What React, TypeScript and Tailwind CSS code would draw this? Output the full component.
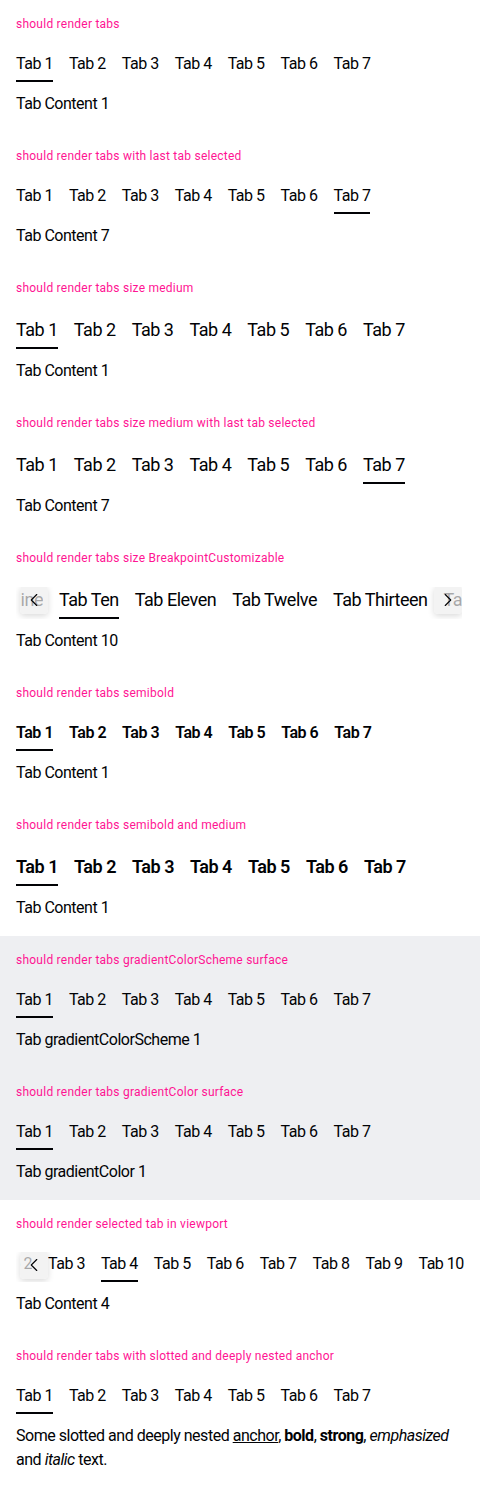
import { ChevronLeft, ChevronRight } from "lucide-react";
import clsx from "clsx";
import type { ReactNode } from "react";

type Size = "small" | "medium";

const seven = ["Tab 1", "Tab 2", "Tab 3", "Tab 4", "Tab 5", "Tab 6", "Tab 7"];

function Tab({ label, active, size, bold }: { label: string; active?: boolean; size: Size; bold?: boolean }) {
  return (
    <button
      className={clsx(
        "shrink-0 whitespace-nowrap border-b-2 pb-1 text-left",
        size === "medium" ? "text-[18px] leading-[26px]" : "text-base leading-6",
        bold && "font-semibold",
        active ? "border-[#010205]" : "border-transparent"
      )}
    >
      {label}
    </button>
  );
}

function ScrollButton({ side }: { side: "left" | "right" }) {
  return (
    <span
      className={clsx(
        "absolute top-[-1px] flex h-7 w-7 items-center justify-center rounded-[4px] bg-[#eeeeee]/70 shadow-[0_2px_6px_rgba(0,0,0,0.15)]",
        side === "left" ? "left-1" : "right-0"
      )}
    >
      {side === "left" ? (
        <ChevronLeft size={22} strokeWidth={1.25} className="text-[#010205]" />
      ) : (
        <ChevronRight size={22} strokeWidth={1.25} className="text-[#010205]" />
      )}
    </span>
  );
}

function TabsBar({
  tabs,
  active,
  size = "small",
  bold,
  before,
  beforeWidth,
  next,
}: {
  tabs: string[];
  active: number;
  size?: Size;
  bold?: boolean;
  before?: string[];
  beforeWidth?: string;
  next?: boolean;
}) {
  const scrolled = !!before;
  return (
    <div className={clsx("relative", scrolled && "overflow-hidden", next && "mr-[2px]")}>
      <div className="flex gap-4">
        {before && (
          <div className={clsx("ml-1 flex shrink-0 justify-end gap-4 overflow-hidden", beforeWidth)}>
            {before.map((t) => (
              <Tab key={t} label={t} size={size} bold={bold} />
            ))}
          </div>
        )}
        {tabs.map((t, i) => (
          <Tab key={t} label={t} size={size} bold={bold} active={i === active} />
        ))}
      </div>
      {scrolled && <ScrollButton side="left" />}
      {next && <ScrollButton side="right" />}
    </div>
  );
}

function Section({ title, size = "small", tabs, children }: { title: string; size?: Size; tabs: ReactNode; children: ReactNode }) {
  return (
    <div className="p-4">
      <p className="text-xs leading-4 tracking-[0.02em] text-[#ff1493]">{title}</p>
      <div className={size === "medium" ? "mt-[21px]" : "mt-5"}>{tabs}</div>
      <div className="mt-[10px] text-base leading-6">{children}</div>
    </div>
  );
}

export default function App() {
  return (
    <div className="bg-white font-['Roboto',sans-serif] tracking-[-0.03em] text-[#010205]">
      <Section title="should render tabs" tabs={<TabsBar tabs={seven} active={0} />}>
        Tab Content 1
      </Section>
      <Section title="should render tabs with last tab selected" tabs={<TabsBar tabs={seven} active={6} />}>
        Tab Content 7
      </Section>
      <Section title="should render tabs size medium" size="medium" tabs={<TabsBar tabs={seven} active={0} size="medium" />}>
        Tab Content 1
      </Section>
      <Section
        title="should render tabs size medium with last tab selected"
        size="medium"
        tabs={<TabsBar tabs={seven} active={6} size="medium" />}
      >
        Tab Content 7
      </Section>
      <Section
        title="should render tabs size BreakpointCustomizable"
        size="medium"
        tabs={
          <TabsBar
            tabs={["Tab Ten", "Tab Eleven", "Tab Twelve", "Tab Thirteen", "Tab Fourteen"]}
            active={0}
            size="medium"
            before={["Tab Nine"]}
            beforeWidth="w-[23px]"
            next
          />
        }
      >
        Tab Content 10
      </Section>
      <Section title="should render tabs semibold" tabs={<TabsBar tabs={seven} active={0} bold />}>
        Tab Content 1
      </Section>
      <Section
        title="should render tabs semibold and medium"
        size="medium"
        tabs={<TabsBar tabs={seven} active={0} size="medium" bold />}
      >
        Tab Content 1
      </Section>
      <div className="bg-[#eeeff2]">
        <Section title="should render tabs gradientColorScheme surface" tabs={<TabsBar tabs={seven} active={0} />}>
          Tab gradientColorScheme 1
        </Section>
        <Section title="should render tabs gradientColor surface" tabs={<TabsBar tabs={seven} active={0} />}>
          Tab gradientColor 1
        </Section>
      </div>
      <Section
        title="should render selected tab in viewport"
        tabs={
          <TabsBar
            tabs={["Tab 3", "Tab 4", "Tab 5", "Tab 6", "Tab 7", "Tab 8", "Tab 9", "Tab 10"]}
            active={1}
            before={["Tab 2"]}
            beforeWidth="w-3"
          />
        }
      >
        Tab Content 4
      </Section>
      <Section title="should render tabs with slotted and deeply nested anchor" tabs={<TabsBar tabs={seven} active={0} />}>
        Some slotted and deeply nested <a className="underline">anchor</a>, <b>bold</b>, <strong>strong</strong>,{" "}
        <em>emphasized</em> and <i>italic</i> text.
      </Section>
    </div>
  );
}
